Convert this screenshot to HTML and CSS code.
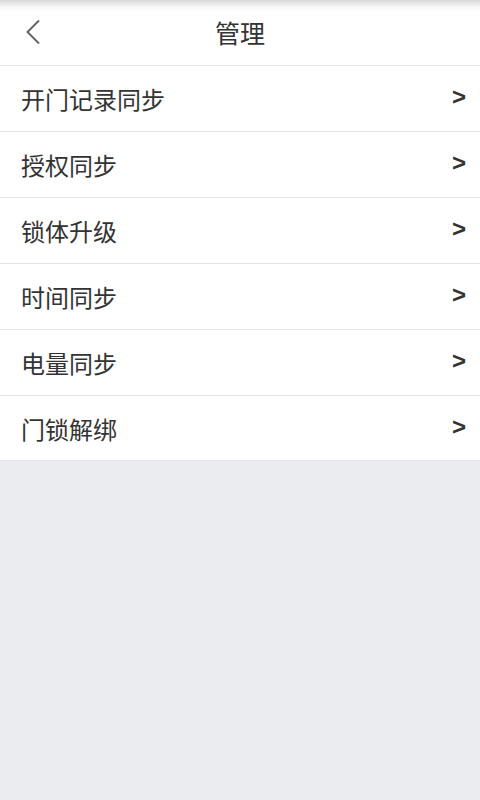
FILE: index.html
```html
<!DOCTYPE html>
<html lang="zh-CN">
<head>
  <meta charset="UTF-8">
  <meta name="viewport" content="width=device-width, initial-scale=1.0">
  <title>管理</title>
  <link rel="stylesheet" href="styles.css">
</head>
<body>

  <!-- Header -->
  <header class="header">
    <button class="back" aria-label="返回">
      <svg width="16" height="26" viewBox="0 0 16 26">
        <path d="M14 1.5 L2.5 13 L14 24.5" fill="none" stroke="#666666" stroke-width="2"/>
      </svg>
    </button>
    <h1 class="title">管理</h1>
  </header>

  <!-- Menu list -->
  <ul class="menu">
    <li class="menu-item"><span>开门记录同步</span><span class="arrow">&gt;</span></li>
    <li class="menu-item"><span>授权同步</span><span class="arrow">&gt;</span></li>
    <li class="menu-item"><span>锁体升级</span><span class="arrow">&gt;</span></li>
    <li class="menu-item"><span>时间同步</span><span class="arrow">&gt;</span></li>
    <li class="menu-item"><span>电量同步</span><span class="arrow">&gt;</span></li>
    <li class="menu-item"><span>门锁解绑</span><span class="arrow">&gt;</span></li>
  </ul>

</body>
</html>
```

FILE: styles.css
```css
/* General Styles */
body {
  font-family: "Noto Sans CJK SC", "Noto Sans", sans-serif;
  background: #ebecf0;
  margin: 0;
  min-height: 800px;
  color: #333333;
}

/* Header */
.header {
  position: relative;
  height: 65px;
  display: flex;
  align-items: center;
  justify-content: center;
  background: linear-gradient(#d9d9d9 0, #f7f7f7 7px, #ffffff 12px);
  border-bottom: 1px solid #e4e4e4;
}

.back {
  position: absolute;
  left: 25px;
  top: 19px;
  padding: 0;
  border: none;
  background: transparent;
  line-height: 0;
}

.title {
  margin: 0;
  font-size: 25px;
  font-weight: normal;
  color: #333333;
  margin-top: -1px;
}

/* Menu */
.menu {
  list-style: none;
  margin: 0;
  padding: 0;
  background: #ffffff;
}

.menu-item {
  height: 65px;
  display: flex;
  align-items: center;
  justify-content: space-between;
  padding: 0 14px 0 21px;
  font-size: 24px;
  color: #333333;
  border-bottom: 1px solid #e4e4e4;
}

.menu-item:last-child {
  height: 64px;
}

.arrow {
  font-family: "Liberation Sans", Arial, sans-serif;
  font-size: 24px;
  font-weight: bold;
  color: #333333;
  margin-top: -3px;
}
```
